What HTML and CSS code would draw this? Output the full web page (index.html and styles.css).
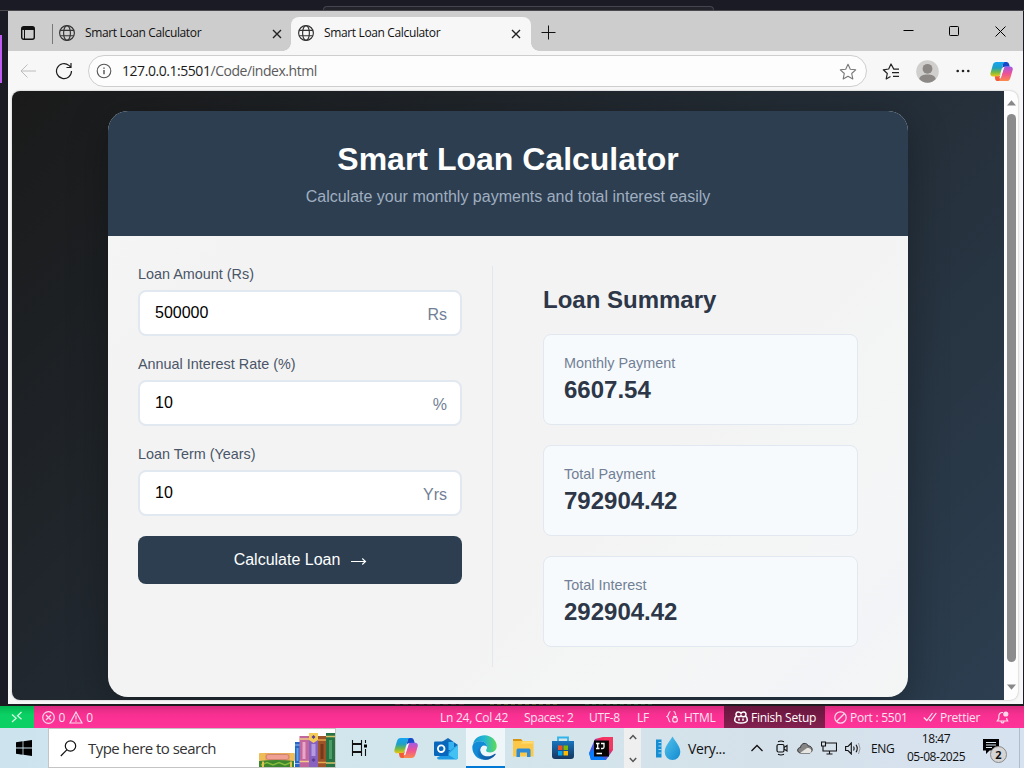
FILE: index.html
```
<!DOCTYPE html>
<html lang="en">
<head>
<meta charset="utf-8">
<title>Smart Loan Calculator</title>
<link rel="stylesheet" href="styles.css">
</head>
<body>
<svg class="defs" width="0" height="0">
  <defs>
    <linearGradient id="cpA" x1="0" y1="0" x2="0" y2="1"><stop offset="0" stop-color="#16a5f2"/><stop offset=".4" stop-color="#1f9fc4"/><stop offset=".7" stop-color="#72b944"/><stop offset="1" stop-color="#f2c80f"/></linearGradient>
    <linearGradient id="cpB" x1="0" y1="0" x2="0" y2="1"><stop offset="0" stop-color="#a05ae8"/><stop offset=".5" stop-color="#ee5295"/><stop offset="1" stop-color="#fb8a4b"/></linearGradient>
    <linearGradient id="edgeA" x1="0" y1="0" x2="1" y2="0"><stop offset="0" stop-color="#1498d8"/><stop offset=".5" stop-color="#25b9d0"/><stop offset="1" stop-color="#5fdc55"/></linearGradient>
    <linearGradient id="edgeB" x1="0" y1="0" x2="1" y2="1"><stop offset="0" stop-color="#1688d8"/><stop offset="1" stop-color="#0b4c94"/></linearGradient>
    <linearGradient id="storeA" x1="0" y1="0" x2="0" y2="1"><stop offset="0" stop-color="#1875bd"/><stop offset="1" stop-color="#16365d"/></linearGradient>
    <linearGradient id="drop" x1="0" y1="0" x2="1" y2="1"><stop offset="0" stop-color="#53c4ec"/><stop offset="1" stop-color="#138ad0"/></linearGradient>
    <linearGradient id="ijA" x1="0" y1="1" x2="1" y2="0"><stop offset="0" stop-color="#087cfa"/><stop offset=".45" stop-color="#5b54d8"/><stop offset=".7" stop-color="#fe2857"/><stop offset="1" stop-color="#e83e8c"/></linearGradient>
    <symbol id="globe" viewBox="0 0 16 16"><g fill="none" stroke="#333" stroke-width="1.15"><circle cx="8" cy="8" r="7.4"/><ellipse cx="8" cy="8" rx="3.4" ry="7.4"/><path d="M1.2 5.3h13.6M1.2 10.7h13.6"/></g></symbol>
    <symbol id="copilot" viewBox="0 0 24 22">
      <path d="M14 1h3.2c1.4 0 2.2.8 2.6 2l.9 3h-5.2c-1.7 0-2.6 1-3 2.5z" fill="#1748c8"/>
      <path d="M6.500 1h9.500c-1.400.3-2 1.300-2.400 2.600l-3 10c-.5 1.700-1.500 2.700-3.400 2.700H3C.7 16.300-.1 14.500.6 12.200L3 4C3.600 2 4.800 1 6.500 1z" fill="url(#cpA)"/>
      <path d="M5 16h3c1.700 0 2.600-.9 3.100-2.500L12 11l-1.500 9.500L9.500 21H8c-1.500 0-2.300-1-2.600-2z" fill="#f15b38"/>
      <path d="M17 5.700h4c2.300 0 3.300 1.800 2.600 4.100L21.200 18c-.6 2-1.800 3-3.500 3H8.500c1.400-.3 2-1.300 2.400-2.600l3-10c.5-1.700 1.300-2.700 3.100-2.700z" fill="url(#cpB)"/>
      <path d="M13.300 7.200L15 6.400l-1 2.800-2.600 8.300-1.700.9 1-3.500z" fill="#f6fafc"/>
    </symbol>
  </defs>
</svg>
<div class="desktop">
  <div class="backdrop"><i class="backdrop-tab"></i></div>

  <div class="stage">
    <i class="accent"></i>
    <main class="window">
      <div class="tabs">
        <svg class="workspace" width="14" height="14" viewBox="0 0 14 14"><rect x=".7" y=".7" width="12.600" height="12.600" rx="2" fill="none" stroke="#111" stroke-width="1.400"/><path d="M1 1h12v3H1z" fill="#111"/><path d="M3.500 4v9" stroke="#111"/></svg>
        <i class="tab-line"></i>
        <div class="tab"><svg width="16" height="16"><use href="#globe"/></svg><span>Smart Loan Calculator</span><svg width="10" height="10" viewBox="0 0 10 10"><path d="M1 1l8 8M9 1L1 9" stroke="#222" stroke-width="1.400"/></svg></div>
        <div class="tab tab-active"><svg width="16" height="16"><use href="#globe"/></svg><span>Smart Loan Calculator</span><svg width="10" height="10" viewBox="0 0 10 10"><path d="M1 1l8 8M9 1L1 9" stroke="#222" stroke-width="1.400"/></svg></div>
        <svg class="plus" width="15" height="15" viewBox="0 0 15 15"><path d="M7.500.5v14M.5 7.500h14" stroke="#111"/></svg>
        <div class="controls">
          <svg width="11" height="11" viewBox="0 0 11 11"><path d="M.5 4.500h10" stroke="#000"/></svg>
          <svg width="11" height="11" viewBox="0 0 11 11"><rect x=".5" y=".5" width="9" height="9" rx=".8" fill="none" stroke="#000"/></svg>
          <svg width="11" height="11" viewBox="0 0 11 11"><path d="M.5.500l10 10M10.500.500l-10 10" stroke="#000"/></svg>
        </div>
      </div>

      <div class="toolbar">
        <svg width="16" height="15" viewBox="0 0 16 15"><path d="M16 7H1M7.500.5L1 7l6.500 6.500" fill="none" stroke="#bcbcbc"/></svg>
        <svg width="18" height="18" viewBox="0 0 18 18"><path d="M16.500 9a7.500 7.500 0 1 1-2.600-5.600L16 5.300M16 1v4.500h-4.500" fill="none" stroke="#1c1c1c" stroke-width="1.200"/></svg>
        <div class="address">
          <svg width="16" height="16" viewBox="0 0 16 16"><circle cx="8" cy="8" r="6.800" fill="none" stroke="#555" stroke-width="1.100"/><path d="M8 7v4.200M8 4.500v1.300" stroke="#444" stroke-width="1.300"/></svg>
          <span class="url">127.0.0.1:5501<em>/Code/index.html</em></span>
          <svg width="18" height="17" viewBox="0 0 18 17"><path d="M9 1.200l2.300 5 5.400.6-4 3.700 1.100 5.400L9 13.300l-4.800 2.600 1.100-5.400-4-3.700 5.400-.6z" fill="none" stroke="#777" stroke-width="1.100" stroke-linejoin="round"/></svg>
        </div>
        <svg class="favs" width="18" height="17" viewBox="0 0 18 17"><path d="M17 6.100h-5.200L9 1 6.700 6 1.300 6.800l4 3.700-1.100 5.400 4.300-2.400M10 9.700h7M11 13.400h6" fill="none" stroke="#222" stroke-width="1.200" stroke-linejoin="round"/></svg>
        <svg class="avatar" width="23" height="23" viewBox="0 0 23 23"><circle cx="11.500" cy="11.500" r="11.300" fill="#d1cfcd"/><circle cx="11.500" cy="8.800" r="4.900" fill="#8b8886"/><path d="M3.200 19c1-3.400 4-4.500 8.300-4.500s7.300 1.100 8.300 4.500a11.200 11.200 0 0 1-16.600 0z" fill="#8b8886"/></svg>
        <svg class="dots" width="14" height="4" viewBox="0 0 14 4"><g fill="#222"><circle cx="1.700" cy="2" r="1.300"/><circle cx="7" cy="2" r="1.300"/><circle cx="12.300" cy="2" r="1.300"/></g></svg>
        <svg class="cp" width="23" height="21"><use href="#copilot"/></svg>
      </div>

      <div class="view">
        <div class="page">
          <section class="calc">
            <header class="calc-head"><h1>Smart Loan Calculator</h1><p>Calculate your monthly payments and total interest easily</p></header>
            <div class="calc-body">
              <form class="form">
                <label>Loan Amount (Rs)</label>
                <div class="field"><span>500000</span><b>Rs</b></div>
                <label>Annual Interest Rate (%)</label>
                <div class="field"><span>10</span><b>%</b></div>
                <label>Loan Term (Years)</label>
                <div class="field"><span>10</span><b>Yrs</b></div>
                <button type="button" class="submit">Calculate Loan <svg width="17" height="10" viewBox="0 0 17 10"><path d="M1 5.500h14.500M12.300 2.500l3.200 3-3.200 3" fill="none" stroke="#fff" stroke-width="1.100"/></svg></button>
              </form>
              <div class="summary">
                <h2>Loan Summary</h2>
                <div class="result"><span>Monthly Payment</span><strong>6607.54</strong></div>
                <div class="result"><span>Total Payment</span><strong>792904.42</strong></div>
                <div class="result"><span>Total Interest</span><strong>292904.42</strong></div>
              </div>
            </div>
          </section>
        </div>
        <div class="scroll">
          <svg width="9" height="6" viewBox="0 0 9 6"><path d="M4.500.3L9 5.500H0z" fill="#888"/></svg>
          <i></i>
          <svg width="9" height="6" viewBox="0 0 9 6"><path d="M4.500 5.700L9 .5H0z" fill="#888"/></svg>
        </div>
      </div>
    </main>
  </div>

  <div class="code-peek"><i class="peek-a"></i><i class="peek-b"></i><i class="peek-c"></i></div>

  <div class="status">
    <div class="remote"><svg width="12" height="12" viewBox="0 0 12 12"><path d="M1 3.500l4.200 3.700L1 11M10.500 1L6.500 4.700l4 3.600" fill="none" stroke="#d8ffe8" stroke-width="1.200"/></svg></div>
    <div class="problems">
      <svg width="13" height="13" viewBox="0 0 13 13"><circle cx="6.500" cy="6.500" r="5.800" fill="none" stroke="#ffd9ea" stroke-width="1.200"/><path d="M4 4l5 5M9 4L4 9" stroke="#ffd9ea" stroke-width="1.200"/></svg><span>0</span>
      <svg width="14" height="13" viewBox="0 0 14 13"><path d="M7 1l6 11H1zM7 4.500v4M7 9.500v1.300" fill="none" stroke="#ffd9ea" stroke-width="1.200"/></svg><span>0</span>
    </div>
    <span class="s-ln">Ln 24, Col 42</span><span class="s-sp">Spaces: 2</span><span class="s-utf">UTF-8</span><span>LF</span>
    <svg width="13" height="14" viewBox="0 0 13 14"><path d="M4.500 1.500C2 1.500 3.500 5.500 1 6.500 3.500 7.500 2 12 4.500 12M7.500 1.500c2.500 0 1 2.500 2.500 3.500" fill="none" stroke="#ffd9ea" stroke-width="1.200"/><circle cx="9" cy="9.800" r="2.400" fill="none" stroke="#ffd9ea" stroke-width="1.200"/><path d="M7 6.500h4" stroke="#ffd9ea" stroke-width="1.200"/></svg>
    <span class="s-html">HTML</span>
    <div class="setup"><svg width="14" height="13" viewBox="0 0 14 13"><path d="M2.200 5.200C.8 6.500.7 8 .7 9.500 2 12.800 12 12.800 13.300 9.500c0-1.500-.1-3-1.500-4.300M2.300 4.800C1.500 2.500 2.500 1 4.300 1c1.500 0 2.300.5 2.700 1.500C7.400 1.500 8.200 1 9.700 1c1.800 0 2.800 1.500 2 3.800-1 1.300-3.700 1.300-4.700 0-1 1.300-3.700 1.300-4.700 0zM5 7.500v2.200M9 7.500v2.200" fill="none" stroke="#fff" stroke-width="1.500"/></svg><span>Finish Setup</span></div>
    <svg class="no" width="13" height="13" viewBox="0 0 13 13"><circle cx="6.500" cy="6.500" r="5.700" fill="none" stroke="#ffd9ea" stroke-width="1.200"/><path d="M2.500 10.500l8-8" stroke="#ffd9ea" stroke-width="1.200"/></svg>
    <span class="s-port">Port : 5501</span>
    <svg width="14" height="10" viewBox="0 0 14 10"><path d="M.8 5.500l3 3L9.500 1M6 7.500l1.500 1.300L13.300 1" fill="none" stroke="#ffe3f0" stroke-width="1.200"/></svg>
    <span class="s-pret">Prettier</span>
    <svg width="13" height="13" viewBox="0 0 13 13"><path d="M7 1.500C4 1.300 2.800 3 2.800 5.500v2.200L1.300 10h10.400l-1-2V7M5 10.500c.5 1.900 2.500 1.900 3 0" fill="none" stroke="#ffd9ea" stroke-width="1.200"/><circle cx="9.800" cy="3" r="2.600" fill="#ffd9ea"/></svg>
  </div>

  <footer class="taskbar">
    <div class="start"><svg width="16" height="16" viewBox="0 0 16 16"><path d="M0 2.200l6.600-.9v6.200H0zM7.400 1.200L16 0v7.500H7.400zM0 8.400h6.600v6.300L0 13.800zM7.400 8.400H16V16l-8.600-1.200z"/></svg></div>
    <div class="search">
      <svg width="17" height="17" viewBox="0 0 17 17"><circle cx="10.500" cy="6" r="5.200" fill="none" stroke="#111" stroke-width="1.200"/><path d="M6.800 9.800L.8 16" stroke="#111" stroke-width="1.200"/></svg>
      <span>Type here to search</span>
      <svg class="books" width="77" height="35" viewBox="0 0 77 35">
        <rect x="1" y="21" width="36" height="8" rx="1" fill="#eebd58"/><rect x="7" y="21" width="25" height="8" fill="#e8a95a"/><rect x="8" y="22.500" width="23" height="5" rx="2.500" fill="#ef9f93" stroke="#c9776c" stroke-width=".7"/>
        <path d="M1 29q18-2 35 0v7H1z" fill="#3d862e"/><path d="M3 33l6-2.500 6 2.500 6-2.500 6 2.500 6-2.500" fill="none" stroke="#85ba3d" stroke-width="1.500"/><path d="M5 29.500v6M33 29.500v6" stroke="#e3bf55" stroke-width="2"/>
        <rect x="37" y="10" width="5" height="26" fill="#2367c8"/><path d="M39.500 16v13" stroke="#5ba2ee" stroke-width="2"/><path d="M37 13h5M37 31.500h5" stroke="#8cc0f4"/>
        <rect x="41.500" y="4" width="9.500" height="32" fill="#c2679c"/><path d="M46 10v17" stroke="#e9a6cb" stroke-width="3"/><path d="M41.500 7h9.500M41.500 29.500h9.500" stroke="#f0cc86" stroke-width="1.500"/>
        <rect x="51" y="1" width="9" height="35" fill="#8762bf"/><path d="M55.500 12v12" stroke="#b59ae0" stroke-width="4"/><path d="M51 1h9v7l-4.500 3L51 8z" fill="#f4cc55"/><path d="M55.500 3l2 2-2 2-2-2zM55.500 26l2 2-2 2-2-2z" fill="#5d3e93"/>
        <rect x="60" y="4" width="8" height="32" fill="#9c5428"/><path d="M64 12v15" stroke="#76391c" stroke-width="3"/><path d="M60 8h8M60 30.500h8" stroke="#e5a953" stroke-width="1.500"/>
        <rect x="68" y="1" width="9" height="35" fill="#287344"/><path d="M72.500 8v19" stroke="#4d9d67" stroke-width="3"/><path d="M68 4.500h9M68 31h9" stroke="#d8c56a" stroke-width="1.500"/>
      </svg>
    </div>
    <div class="app app-view"><svg width="18" height="18" viewBox="0 0 18 18"><path d="M2.500 1v3.500h9V1M2.500 17v-3.500h9V17M2.500 5.500h9v7h-9zM15.500 1v3M15.500 10v7" fill="none" stroke="#111" stroke-width="1.100"/><path d="M14 5.500h3v3h-3z"/></svg></div>
    <div class="app app-cp"><svg width="24" height="22"><use href="#copilot"/></svg></div>
    <div class="app"><svg width="25" height="23" viewBox="0 0 25 23"><path d="M3 8l11-7 10 7-11 8z" fill="#116bb8"/><path d="M7 5h13v8H7z" fill="#35b2ef"/><path d="M14 15L24 8v12.500q0 2-2 2H5q-2 0-2-2z" fill="#1e9be4"/><path d="M24 8v12.500q0 2-2 2l-8-5z" fill="#42c1f2"/><rect x="0" y="4.500" width="14.500" height="14.500" rx="1.200" fill="#0867bd"/><circle cx="7.200" cy="11.700" r="3.300" fill="none" stroke="#fff" stroke-width="1.800"/></svg></div>
    <div class="app app-edge"><svg width="25" height="25" viewBox="0 0 24 24"><path d="M1 9C2 3.700 6.400.3 12 .3c6.700 0 11.700 5 11.700 10.200 0 3.800-2.800 6.200-6.200 6.200-2.400 0-4-.9-4-1.900 0-.7 1-1.200 1-3.200C14.500 8 11.200 6 7.800 6 4 6 1.700 7.500 1 9z" fill="url(#edgeA)"/><path d="M.3 12C.2 7.800 4 6 7.800 6c3.400 0 6.700 2 6.700 5.200-4.200-2.900-7.600.7-6.500 4.500 1.200 4 5 6.300 9 7.100-1.500.7-3.200 1-5 1C5.400 23.800.3 18.400.3 12z" fill="#128bd7"/><path d="M10 10.500C7.300 12 7.200 16 9.500 18.500c3 3 8.500 2.500 12.500-.5.500-.3 1 .2.700.6C20.300 21.800 16.700 24 12.500 23.700 7 23 4.700 18.500 5.200 15c.4-2.600 2.200-4.500 4.800-4.500z" fill="url(#edgeB)"/></svg></div>
    <div class="app"><svg width="23" height="20" viewBox="0 0 23 20"><path d="M1 1h8l2 2.500H1z" fill="#d8940e"/><path d="M1 3h20.500v15.500H1z" fill="#fcc84a"/><path d="M1 5.500h20.500v-2H11l-2 2z" fill="#ffdc72"/><path d="M4.500 19v-7q0-1.500 1.500-1.500h11q1.500 0 1.500 1.500v7H15v-4.500H8V19z" fill="#2d8ad4"/></svg></div>
    <div class="app"><svg width="24" height="24" viewBox="0 0 24 24"><path d="M7 6V1.500h10V6" fill="none" stroke="#30b4e9" stroke-width="1.800"/><path d="M1 5h22v15q0 3-3 3H4q-3 0-3-3z" fill="url(#storeA)"/><path d="M7 9.500h4.500V14H7z" fill="#f25022"/><path d="M12.500 9.500H17V14h-4.500z" fill="#7fba00"/><path d="M7 15h4.500v4.500H7z" fill="#00a4ef"/><path d="M12.500 15H17v4.500h-4.500z" fill="#ffb900"/></svg></div>
    <div class="app"><svg width="25" height="25" viewBox="0 0 25 25"><path d="M6 3l8-2h10v13l-7 10H2L0 17z" fill="url(#ijA)"/><path d="M14 1h10v13l-7-3z" fill="#f43864"/><path d="M0 17l5-3 12 10H2z" fill="#087cfa"/><rect x="5" y="4.500" width="15" height="16" fill="#050505"/><path d="M7 7.500h3.500M8.700 7.500v5M7 12.500h3.500M12 7.500h3v3.500q0 1.500-1.500 1.500H12M7.500 17.500H13" fill="none" stroke="#fff" stroke-width="1.300"/></svg></div>
    <div class="pager"><svg width="8" height="6" viewBox="0 0 8 6"><path d="M.8 5L4 1.500 7.200 5" fill="none" stroke="#555" stroke-width="1.500"/></svg><svg width="8" height="6" viewBox="0 0 8 6"><path d="M.8 1L4 4.500 7.200 1" fill="none" stroke="#555" stroke-width="1.500"/></svg></div>
    <div class="weather"><svg width="25" height="25" viewBox="0 0 25 25"><path d="M0 3.500h5.500v18H0z" fill="#168ed3"/><path d="M2.500 6.500h3M2.500 10h3M2.500 13.500h3M2.500 17h3" stroke="#9cddf5"/><path d="M16.500.5c2 4 7.800 9.500 7.800 15.500a7.800 8 0 0 1-15.600 0c0-6 5.800-11.500 7.800-15.500z" fill="url(#drop)"/></svg><span>Very...</span></div>
    <div class="tray">
      <svg width="12" height="8" viewBox="0 0 12 8"><path d="M.5 7L6 1.500 11.500 7" fill="none" stroke="#111" stroke-width="1.300"/></svg>
      <svg class="cam" width="12" height="16" viewBox="0 0 12 16"><rect x="1" y="4.500" width="7" height="7.500" rx="1.500" fill="none" stroke="#111" stroke-width="1.200"/><path d="M8 7.500l3-2v5.500l-3-2M2 1.700Q5 .2 8 1.700M2 14.300q3 1.500 6 0" fill="none" stroke="#111" stroke-width="1.100"/></svg>
      <svg width="16" height="12" viewBox="0 0 16 12"><path d="M3.500 11C-.5 10.500 0 5.500 3.500 5.500 4 .5 10 .2 11.300 4c4-.5 5.500 5.500 1.500 7z" fill="#858585" stroke="#333"/><path d="M3 11l7-5c3-.5 6 2 3.500 5z" fill="#e6e5e2"/></svg>
      <svg width="16" height="14" viewBox="0 0 16 14"><path d="M5 2h10.500v8H5M2 5v5h3M5.500 13h6M8.500 10v3M.5 1h4v4h-4z" fill="none" stroke="#111" stroke-width="1.100"/></svg>
      <svg width="16" height="13" viewBox="0 0 16 13"><path d="M.6 4.500H3L6.300 1v11L3 8.500H.6zM8.500 4.500q1.200 2 0 4M11 2.800q2.500 3.700 0 7.400" fill="none" stroke="#111" stroke-width="1.100"/><path d="M13.500 1q3 5.500 0 11" fill="none" stroke="#999"/></svg>
      <span>ENG</span>
    </div>
    <div class="clock"><span>18:47</span><span>05-08-2025</span></div>
    <div class="notice"><svg width="16" height="15" viewBox="0 0 16 15"><path d="M0 0h16v11.500H6.500L3 15v-3.500H0z"/><path d="M3 3.500h10M3 6h10M3 8.500h6" stroke="#d5e4ee"/></svg><b>2</b></div>
    <i class="show-desktop"></i>
  </footer>
</div>
</body>
</html>
```
FILE: styles.css
```
* { box-sizing: border-box; }
body { margin: 0; overflow: hidden; font-family: "Open Sans", "Noto Sans", sans-serif; }
.defs { position: absolute; }
svg { display: block; flex: none; }
span { white-space: nowrap; }
.desktop { width: 1024px; height: 768px; display: flex; flex-direction: column; background: #1b1b25; }

.backdrop { height: 11px; padding: 6px 0 0 323px; border-bottom: 1px solid #4a4a4e; flex: none; }
.backdrop-tab { display: block; width: 391px; height: 4px; border: 1px solid #454550; border-bottom: 0; border-radius: 5px 5px 0 0; background: #23232b; }
.stage { height: 693px; display: flex; flex: none; }
.accent { width: 2px; height: 48px; margin: 24px 6px 0 0; background: #bf5af2; }
.window { width: 1015px; height: 693px; background: #f7f7f7; }

/* Tab strip */
.tabs { height: 40px; background: #cdcdcd; display: flex; align-items: center; padding-left: 13px; }
.workspace { margin-top: 4px; }
.tab-line { width: 1px; height: 20px; background: #777; margin: 5px 0 0 17px; }
.tab { display: flex; align-items: center; width: 238px; height: 34px; margin-top: 6px; padding: 0 0 2px 6px; font-size: 12px; color: #111; }
.tab span { width: 186px; margin: -1px 0 0 10px; letter-spacing: -.36px; }
.tab > svg:last-child { margin: 1px 0 0 1px; }
.tab-active { position: relative; width: 240px; padding-left: 7px; background: #f7f7f7; border-radius: 8px 8px 0 0; }
.tab-active::before, .tab-active::after { content: ""; position: absolute; bottom: 0; width: 8px; height: 8px; }
.tab-active::before { left: -8px; background: radial-gradient(circle at 0 0, #cdcdcd 7.500px, #f7f7f7 8px); }
.tab-active::after { right: -8px; background: radial-gradient(circle at 100% 0, #cdcdcd 7.500px, #f7f7f7 8px); }
.plus { margin: 3px 0 0 10px; }
.controls { display: flex; gap: 35px; margin-left: auto; margin-right: 17px; }

/* Address row */
.toolbar { height: 40px; display: flex; align-items: center; padding-left: 12px; }
.toolbar > svg:nth-child(2) { margin-left: 19px; }
.address { display: flex; align-items: center; width: 779px; height: 32px; margin-left: 15px; padding: 0 9px 0 7px; border: 1px solid #cecece; border-radius: 16px; background: #fdfdfd; }
.url { flex: 1; margin: -1px 0 0 10px; font-size: 14px; letter-spacing: -.45px; color: #1b1b1b; }
.url em { font-style: normal; color: #5a5a5a; }
.favs { margin-left: 15px; }
.avatar { margin-left: 16px; }
.dots { margin-left: 17px; }
.cp { margin-left: 20px; }

/* Rendered document */
.view { width: 1006px; height: 609px; margin-left: 4px; display: flex; overflow: hidden; border-radius: 8px; background: #fdfdfd; box-shadow: 0 0 2px #aaa; }
.page { width: 992px; padding: 20px 96px 0; overflow: hidden; background: linear-gradient(135deg, #1a1a1a, #2c3e50); font-family: "Liberation Sans", Arial, sans-serif; }
.calc { width: 800px; height: 586px; overflow: hidden; border-radius: 20px; background: linear-gradient(135deg, #f4f6f5, #f3f3f3 20%, #f3f3f3 65%, #f4f6f6 80%, #f3f4f7 92%, #f4f6f5); box-shadow: 0 10px 40px rgba(0,0,0,.3); }
.calc-head { height: 125px; padding-top: 30px; background: #2c3e50; text-align: center; }
.calc-head h1 { margin: 0; font-size: 32px; line-height: 37px; color: #fff; }
.calc-head p { margin: 10px 0 0; font-size: 16px; line-height: 18px; color: #a0aec0; }
.calc-body { display: flex; padding: 30px; }
.form { width: 355px; height: 401px; padding-right: 30px; border-right: 1px solid #e2e8f0; }
.form label { display: block; height: 24px; font-size: 14.4px; line-height: 16px; color: #4a5568; }
.field { display: flex; align-items: center; justify-content: space-between; width: 324px; height: 46px; margin-bottom: 20px; padding: 0 13px 0 15px; border: 2px solid #e2e8f0; border-radius: 8px; background: #fff; font-size: 16px; color: #000; }
.field b { padding-top: 4px; font-weight: 400; color: #718096; }
.submit { display: flex; align-items: center; justify-content: center; gap: 10px; width: 324px; height: 48px; padding: 0 0 0 1px; border: 0; border-radius: 8px; background: #2c3e50; color: #fff; font: 16px "Liberation Sans", Arial, sans-serif; }
.submit svg { margin-top: 1px; }
.summary { width: 315px; margin-left: 50px; }
.summary h2 { height: 48px; margin: 20px 0 0; font-size: 24px; line-height: 28px; color: #2d3748; }
.result { height: 91px; margin-bottom: 20px; padding: 20px; border: 1px solid #e2e8f0; border-radius: 8px; background: #f7fafc; }
.result span, .result strong { display: block; }
.result span { font-size: 14.4px; line-height: 16px; color: #718096; }
.result strong { margin-top: 5px; font-size: 24px; line-height: 28px; color: #2d3748; }
.scroll { width: 14px; display: flex; flex-direction: column; align-items: center; padding-top: 9px; }
.scroll i { width: 9px; height: 548px; margin: 8px 0 22px; border-radius: 5px; background: #8b8b8b; }

/* Editor status bar */
.code-peek { height: 2px; padding-left: 395px; display: flex; flex: none; background: #1b1b20; }
.code-peek i { height: 1px; width: 70px; margin-right: 25px; background: repeating-linear-gradient(90deg, #54243a 0 5px, transparent 5px 8px); }
.code-peek .peek-b { background: repeating-linear-gradient(90deg, #55472b 0 4px, transparent 4px 7px); }
.code-peek .peek-c { background: repeating-linear-gradient(90deg, #25452f 0 4px, transparent 4px 7px); }
.status { height: 22px; flex: none; display: grid; grid-template-columns: 34px 406px 84px 65px 48px 29px 18px 40px 101px 9px 16px 73px 17px 56px auto; align-items: center; background: linear-gradient(#d92a7e, #f93092 9px, #ff3399); color: #ffe3f0; font-size: 12px; letter-spacing: -.25px; }
.remote { height: 22px; display: grid; place-items: center; background: linear-gradient(#03b650, #0bd164 9px); }
.problems { display: flex; align-items: center; padding-left: 8px; gap: 3.5px; }
.s-utf { letter-spacing: -.3px; }
.setup { height: 22px; display: flex; align-items: center; gap: 3px; padding-left: 10px; background: linear-gradient(#68153d, #83204f); color: #fff; }
.no { grid-column: 10 / 12; margin-left: 9px; }

/* Taskbar */
.taskbar { height: 40px; flex: none; display: flex; align-items: center; background: linear-gradient(90deg, #cde4ef, #d3e6ec 45%, #d5e1ea 75%, #d7e2f0); color: #111; }
.start { width: 48px; padding-left: 16px; }
.search { width: 288px; height: 40px; display: flex; align-items: center; padding-left: 11px; border: 1px solid #c4c4c4; background: #fff; }
.search span { width: 171px; margin-left: 11px; font-size: 15px; letter-spacing: -.53px; color: #333; }
.search .books { margin-left: -1px; }
.books { align-self: flex-end; }
.app { width: 39px; height: 40px; display: grid; place-items: center; flex: none; }
.app-view { width: 48px; }
.app-view svg { margin-right: 2px; }
.app-cp { width: 43px; }
.app-edge { background: #eff6f9; border-bottom: 2px solid #0078d4; }
.app-edge svg { margin-right: 2px; }
.app-edge ~ .app svg { margin-right: 2px; }
.pager { width: 17px; height: 40px; margin-left: 2px; display: flex; flex-direction: column; align-items: center; justify-content: space-between; padding: 6px 0 5px; background: #efefef; }
.weather { width: 110px; display: flex; align-items: center; gap: 7px; padding-left: 15px; font-size: 14px; letter-spacing: -.4px; }
.tray { width: 153px; display: flex; align-items: center; gap: 8px; font-size: 12px; }
.tray .cam { margin-left: 5px; }
.tray .cam + svg { margin-left: 1px; }
.tray span { letter-spacing: -.3px; margin-left: 2px; }
.clock { width: 64px; display: flex; flex-direction: column; align-items: center; font-size: 12px; line-height: 18px; letter-spacing: -.45px; }
.notice { position: relative; width: 38px; height: 22px; padding-left: 15px; padding-top: 2px; }
.notice b { position: absolute; left: 22px; top: 9px; width: 17px; height: 17px; border: 1px solid #888; border-radius: 50%; background: #d5d5d5; font-size: 11px; line-height: 15px; text-align: center; }
.show-desktop { width: 1px; height: 40px; margin-left: auto; margin-right: 4px; background: #aebdcc; }
```
